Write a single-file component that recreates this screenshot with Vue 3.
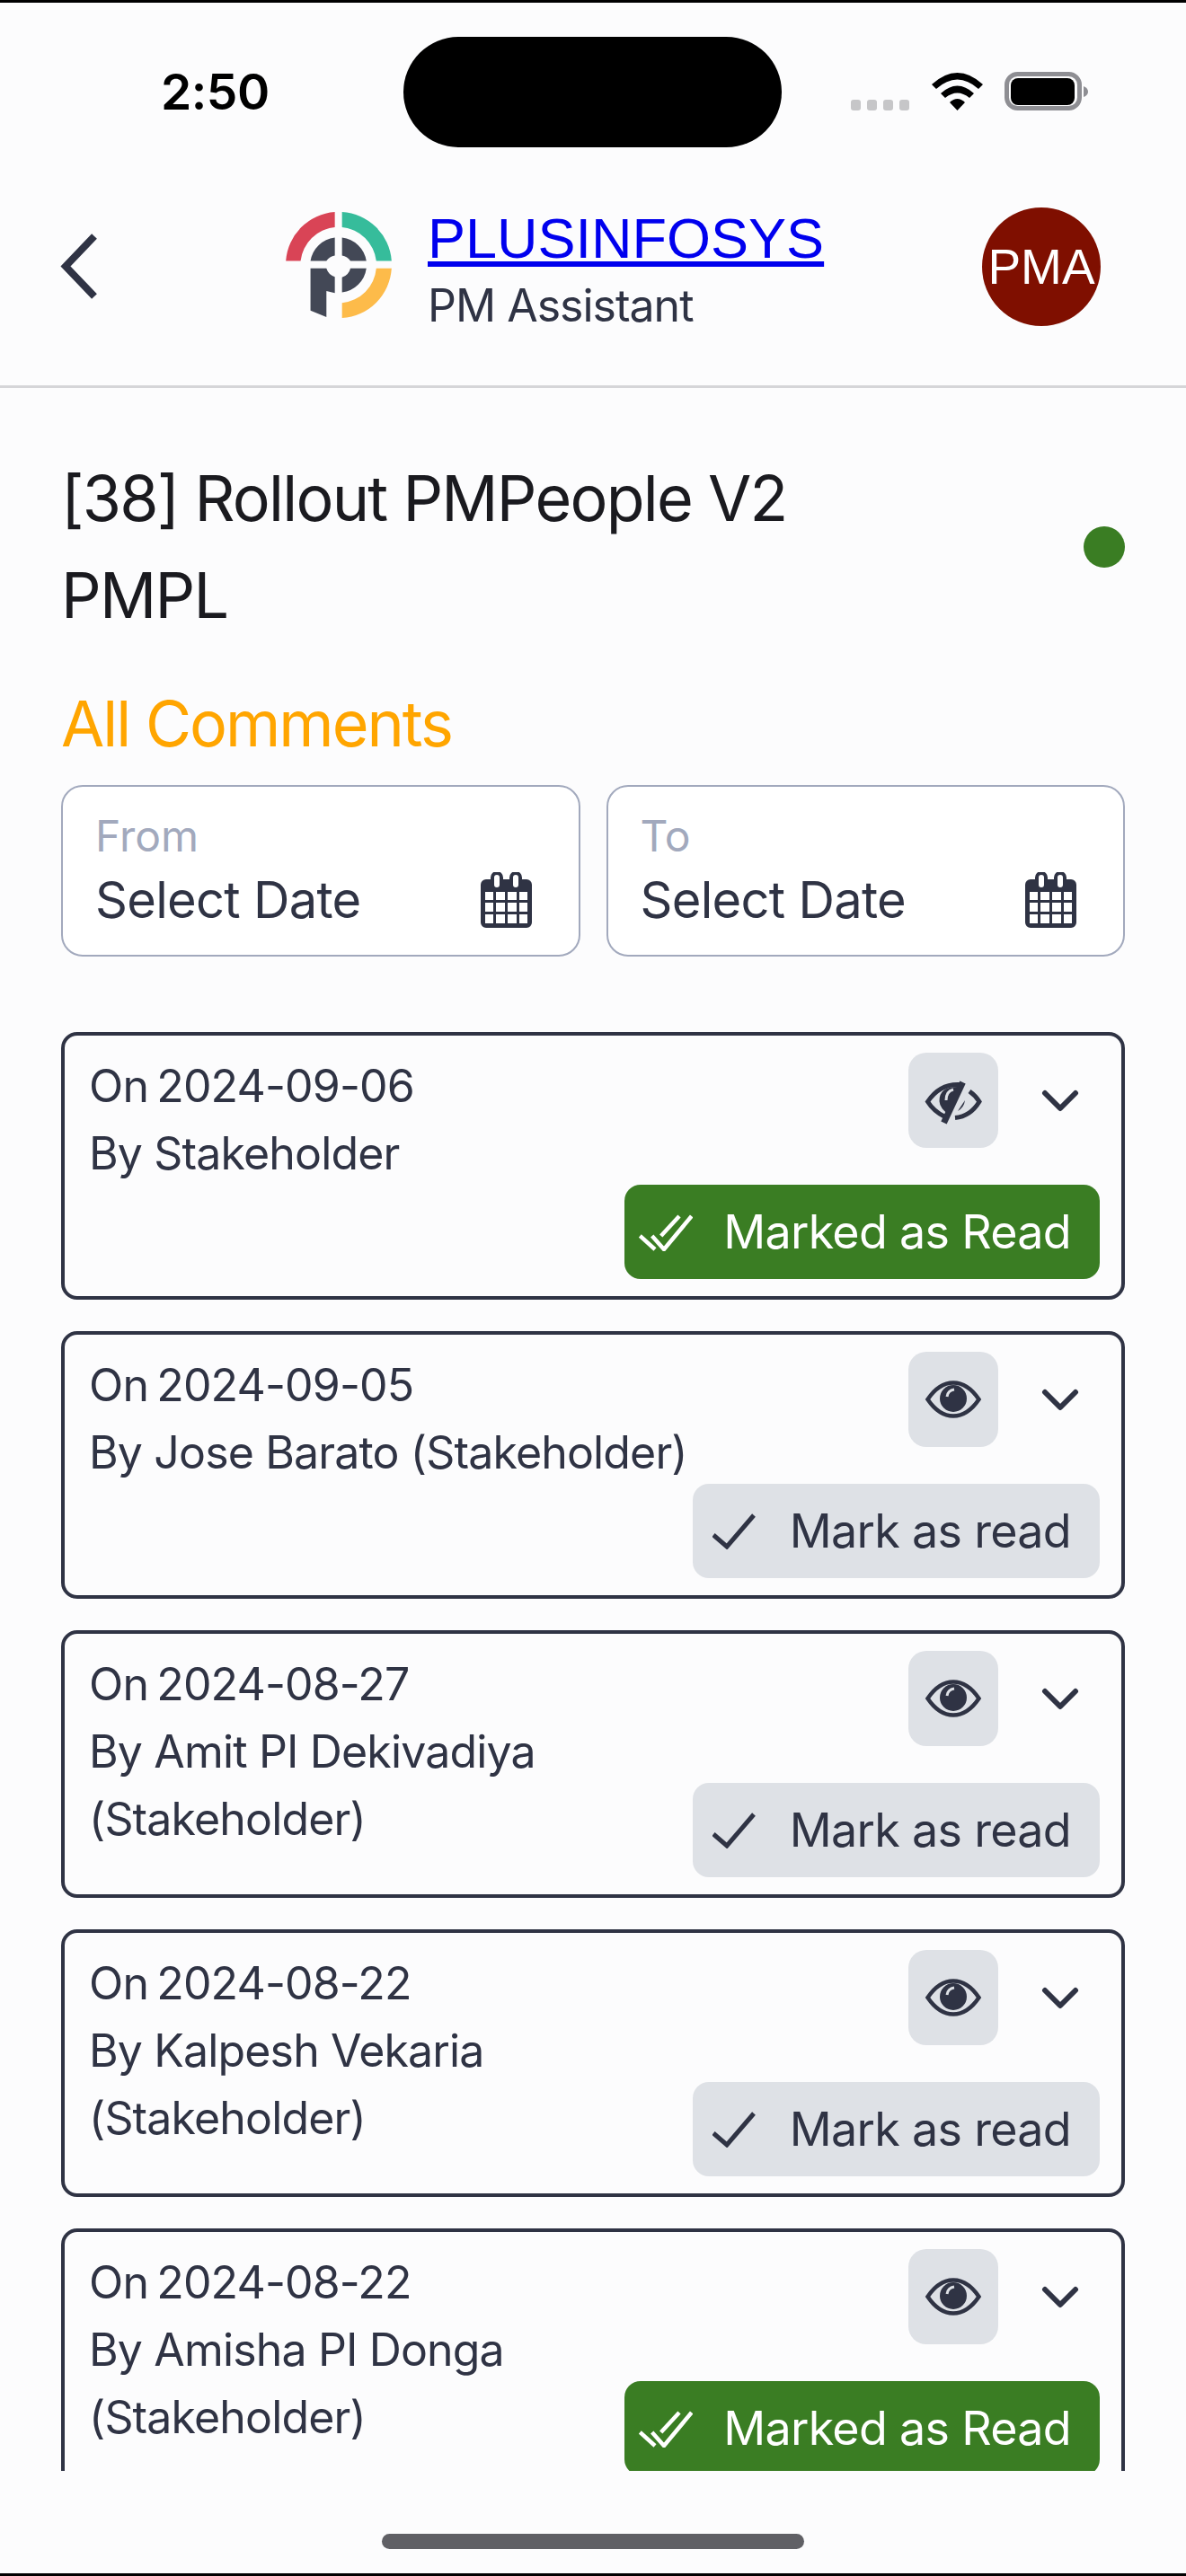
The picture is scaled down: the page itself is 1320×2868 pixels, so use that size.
<template>
  <div class="phone">
    <div class="status">
      <span class="time">2:50</span>
      <div class="island"></div>
      <svg class="status-icons" width="264" height="43" viewBox="947 79 264 43">
        <rect x="947" y="110" width="11" height="12" rx="3" fill="#c6c6c8" />
        <rect x="965" y="110" width="11" height="12" rx="3" fill="#c6c6c8" />
        <rect x="983" y="110" width="11" height="12" rx="3" fill="#c6c6c8" />
        <rect x="1001" y="110" width="11" height="12" rx="3" fill="#c6c6c8" />
        <path d="M1037 93 Q1065.5 67 1094 93 L1089 98 Q1065.5 77 1042 98 Z" fill="#000" />
        <path d="M1047 103 Q1065.5 86 1084 103 L1079 108 Q1065.5 97 1052 108 Z" fill="#000" />
        <path d="M1057 113 Q1065.5 105 1074 113 L1065.5 122 Z" fill="#000" />
        <rect x="1120.5" y="81.5" width="81" height="38" rx="12" fill="none" stroke="#8e8e93" stroke-width="5" />
        <rect x="1125" y="86" width="71" height="30" rx="8" fill="#000" />
        <path d="M1206 95 Q1211 97 1211 101 Q1211 105 1206 107 Z" fill="#8e8e93" />
      </svg>
    </div>

    <header class="header">
      <svg class="back" width="43" height="73" viewBox="0 0 43 73">
        <path d="M38 3 L6 36.5 L38 70" fill="none" stroke="#2f3344" stroke-width="8" />
      </svg>
      <div class="brand">
        <svg class="logo" width="118" height="118" viewBox="115 77 352 353">
          <path d="M278 77 A176 176 0 0 0 115 240 L164 240 A127 127 0 0 1 278 128 Z" fill="#d94456" />
          <path d="M302 77 A176 176 0 0 1 467 240 L416 240 A127 127 0 0 0 302 128 Z" fill="#36bc9b" />
          <path d="M467 265 A176 176 0 0 1 302 430 L302 380 A127 127 0 0 0 416 265 Z" fill="#fdbb4a" />
          <path d="M278 162 A93 93 0 0 0 197 240 L250 240 A42 42 0 0 1 278 222 Z" fill="#434856" />
          <path d="M302 162 A93 93 0 0 1 383 240 L330 240 A42 42 0 0 0 302 222 Z" fill="#434856" />
          <path d="M383 265 A93 93 0 0 1 302 345 L302 295 A42 42 0 0 0 330 265 Z" fill="#434856" />
          <path d="M197 265 L250 265 A42 42 0 0 0 278 293 L278 347 L250 340 L250 427 L197 405 Z" fill="#434856" />
        </svg>
        <div class="brand-text">
          <a class="brand-name" href="#">PLUSINFOSYS</a>
          <span class="brand-sub">PM Assistant</span>
        </div>
      </div>
      <div class="avatar">PMA</div>
    </header>

    <main class="content">
      <div class="project">
        <div class="project-title">[38] Rollout PMPeople V2<br />PMPL</div>
        <span class="dot"></span>
      </div>
      <h2 class="section">All Comments</h2>

      <div class="dates">
        <div v-for="d in dateFields" :key="d" class="date-box">
          <span class="date-label">{{ d }}</span>
          <div class="date-row">
            <span class="date-value">Select Date</span>
            <svg width="57" height="62" viewBox="0 0 57 62">
              <path fill-rule="evenodd" fill="#2f3344" d="M6 8 H11 V6 A7 7 0 0 1 25 6 V8 H32 V6 A7 7 0 0 1 46 6 V8 H51 A6 6 0 0 1 57 14 V56 A6 6 0 0 1 51 62 H6 A6 6 0 0 1 0 56 V14 A6 6 0 0 1 6 8 Z M15 6 V14 A3 3 0 0 0 21 14 V6 A3 3 0 0 0 15 6 Z M36 6 V14 A3 3 0 0 0 42 14 V6 A3 3 0 0 0 36 6 Z M5 22 V31 H14 V22 Z M17 22 V31 H27 V22 Z M30 22 V31 H40 V22 Z M43 22 V31 H52 V22 Z M5 34 V44 H14 V34 Z M17 34 V44 H27 V34 Z M30 34 V44 H40 V34 Z M43 34 V44 H52 V34 Z M5 47 V57 H14 V47 Z M17 47 V57 H27 V47 Z M30 47 V57 H40 V47 Z M43 47 V57 H52 V47 Z" />
            </svg>
          </div>
        </div>
      </div>

      <div class="list">
        <div v-for="c in comments" :key="c.by" class="card">
          <div class="card-text">
            <div class="card-date">On 2024-{{ c.date }}</div>
            <div>By {{ c.by }}</div>
          </div>
          <div class="card-actions">
            <div class="card-top">
              <button class="eye-btn">
                <svg class="eye" width="62" height="42" viewBox="0 0 62 42">
                  <template v-if="c.hidden">
                    <path d="M39 3.5 Q16 2 2.5 22.5 Q9 33 21 39" fill="none" stroke="#2f3344" stroke-width="5" />
                    <path d="M49 11 Q56 16 60 22.5 Q50 39 33 40.5" fill="none" stroke="#2f3344" stroke-width="5" />
                    <path d="M38 6 Q15 5 15.5 22 Q16 30 26 37 L40 8 Z" fill="#2f3344" />
                    <path d="M23 21 Q23 11 31 9" fill="none" stroke="#dee1e6" stroke-width="3" />
                    <path d="M44 21 Q43 29 36 33 Z" fill="#2f3344" />
                    <path d="M41.5 1 L20.5 46" stroke="#2f3344" stroke-width="7" />
                  </template>
                  <template v-else>
                    <path d="M2.5 21 Q15 2.5 31 2.5 Q47 2.5 59.5 21 Q47 39.5 31 39.5 Q15 39.5 2.5 21 Z" fill="none" stroke="#2f3344" stroke-width="4.5" />
                    <circle cx="31" cy="20" r="15" fill="#2f3344" />
                    <path d="M24 18 Q25 11 32 10" fill="none" stroke="#dee1e6" stroke-width="3" />
                  </template>
                </svg>
              </button>
              <span class="chevron">
                <svg width="42" height="25" viewBox="0 0 42 25">
                  <path d="M4 4 L21 21 L38 4" fill="none" stroke="#2f3344" stroke-width="6" stroke-linecap="round" stroke-linejoin="round" />
                </svg>
              </span>
            </div>
            <button v-if="c.read" class="read-btn done">
              <svg width="60" height="42" viewBox="0 0 60 42">
                <path d="M1.3 25 L18 40" fill="none" stroke="#fff" stroke-width="4.5" />
                <path d="M14.7 25 L28 40 L58.7 3" fill="none" stroke="#fff" stroke-width="4.5" />
                <path d="M24.7 25 L45 3" fill="none" stroke="#fff" stroke-width="4.5" />
              </svg>
              <span>Marked as Read</span>
            </button>
            <button v-else class="read-btn">
              <svg width="48" height="40" viewBox="0 0 48 40">
                <path d="M1 24 L16 37 L46 2" fill="none" stroke="#2f3344" stroke-width="5" />
              </svg>
              <span>Mark as read</span>
            </button>
          </div>
        </div>
      </div>
    </main>

    <footer class="footer">
      <div class="home-bar"></div>
    </footer>
  </div>
</template>

<script setup>
const dateFields = ['From', 'To']

const comments = [
  { date: '09-06', by: 'Stakeholder', hidden: true, read: true },
  { date: '09-05', by: 'Jose Barato (Stakeholder)', hidden: false, read: false },
  { date: '08-27', by: 'Amit PI Dekivadiya (Stakeholder)', hidden: false, read: false },
  { date: '08-22', by: 'Kalpesh Vekaria (Stakeholder)', hidden: false, read: false },
  { date: '08-22', by: 'Amisha PI Donga (Stakeholder)', hidden: false, read: true },
]
</script>

<style>
html,
body {
  margin: 0;
  background: #fcfcfd;
}
</style>

<style scoped>
.phone {
  box-sizing: border-box;
  height: 2868px;
  border-top: 3px solid #000;
  border-bottom: 3px solid #000;
  background: #fcfcfd;
  display: flex;
  flex-direction: column;
  overflow: hidden;
  font-family: Inter, 'Liberation Sans', sans-serif;
  color: #2f3344;
}

.status {
  display: flex;
  align-items: center;
  padding: 38px 0 0 179px;
}
.time {
  width: 270px;
  font-size: 55px;
  font-weight: 600;
  letter-spacing: -0.5px;
  color: #000;
  line-height: 123px;
}
.island {
  width: 421px;
  height: 123px;
  border-radius: 62px;
  background: #000;
}
.status-icons {
  margin: 0 0 3px 77px;
}

.header {
  display: flex;
  align-items: center;
  padding: 66px 95px 66px 67px;
  border-bottom: 3px solid #d5d5d8;
}
.back {
  margin-right: 208px;
}
.brand {
  display: flex;
  align-items: center;
  gap: 40px;
  margin: -8px 0;
}
.logo {
  margin-bottom: 4px;
}
.brand-text {
  display: flex;
  flex-direction: column;
  padding-top: 7px;
}
.brand-name {
  font-family: 'Liberation Sans', sans-serif;
  font-size: 63px;
  line-height: 72px;
  color: #0000ee;
}
.brand-sub {
  margin-top: 8px;
  font-size: 50px;
  line-height: 62px;
  letter-spacing: -1px;
}
.avatar {
  margin-left: auto;
  width: 132px;
  height: 132px;
  border-radius: 50%;
  background: #7f0f00;
  color: #fff;
  font-family: 'Liberation Sans', sans-serif;
  font-size: 55px;
  display: flex;
  align-items: center;
  justify-content: center;
}

.content {
  flex: 1;
  min-height: 0;
  display: flex;
  flex-direction: column;
  padding: 69px 68px 0 68px;
}
.project {
  display: flex;
  align-items: center;
  justify-content: space-between;
}
.project-title {
  font-size: 70px;
  line-height: 108px;
  letter-spacing: -1.75px;
  color: #1a1a1f;
}
.dot {
  width: 46px;
  height: 46px;
  border-radius: 50%;
  background: #3a7d23;
}
.section {
  margin: 49px 0 28px;
  font-size: 70px;
  line-height: 80px;
  letter-spacing: -2px;
  font-weight: 400;
  color: #ffa500;
}

.dates {
  display: grid;
  grid-template-columns: 1fr 1fr;
  gap: 29px;
}
.date-box {
  box-sizing: border-box;
  height: 191px;
  padding: 26px 52px 0 36px;
  border: 2px solid #a2a9bd;
  border-radius: 24px;
  background: #fff;
}
.date-label {
  display: block;
  font-size: 48px;
  line-height: 58px;
  color: #a2a9bd;
}
.date-row {
  display: flex;
  align-items: center;
  justify-content: space-between;
  margin-top: 8px;
  font-size: 56px;
  letter-spacing: -0.7px;
}

.list {
  flex: 1;
  min-height: 0;
  margin-top: 84px;
  overflow: hidden;
  display: flex;
  flex-direction: column;
  gap: 35px;
}
.card {
  box-sizing: border-box;
  flex: none;
  display: flex;
  padding: 19px 24px 19px 27px;
  border: 4px solid #2f3344;
  border-radius: 18px;
}
.card-text {
  flex: 1;
  min-width: 0;
  font-size: 50px;
  line-height: 75px;
  letter-spacing: -0.85px;
}
.card-date {
  word-spacing: -4px;
}
.card-actions {
  flex: none;
  display: flex;
  flex-direction: column;
  align-items: flex-end;
  gap: 41px;
}
.card-top {
  display: flex;
  align-items: center;
}
.eye-btn {
  width: 100px;
  height: 106px;
  padding: 0;
  border: none;
  border-radius: 20px;
  background: #dee1e6;
  display: flex;
  align-items: center;
  justify-content: center;
}
.eye {
  overflow: visible;
}
.chevron {
  width: 113px;
  height: 106px;
  padding-left: 48px;
  box-sizing: border-box;
  display: flex;
  align-items: center;
}
.read-btn {
  height: 105px;
  padding: 0 32px 0 22px;
  border: none;
  border-radius: 18px;
  background: #dee1e6;
  color: #2f3344;
  font-family: inherit;
  font-size: 52px;
  letter-spacing: -0.7px;
  white-space: nowrap;
  display: flex;
  align-items: center;
  gap: 38px;
}
.read-btn.done {
  padding-left: 16px;
  gap: 34px;
  background: #3a7d23;
  color: #fff;
}

.footer {
  flex: none;
  height: 114px;
  padding-top: 70px;
  box-sizing: border-box;
  display: flex;
  justify-content: center;
}
.home-bar {
  width: 470px;
  height: 17px;
  border-radius: 9px;
  background: #606065;
}
</style>
